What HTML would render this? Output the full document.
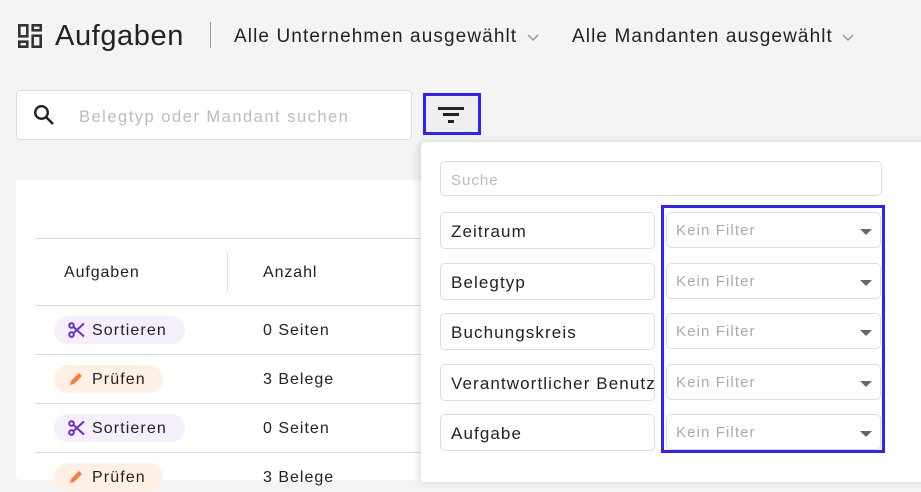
<!DOCTYPE html>
<html><head><meta charset="utf-8"><style>
*{box-sizing:border-box;margin:0;padding:0}
body{width:921px;height:475px;overflow:hidden;background:#f4f4f4;font-family:"Liberation Sans",sans-serif;color:#222;position:relative}
.a{position:absolute}
.t{white-space:nowrap}
.inp{position:absolute;background:#fff;border:1px solid #ddd;border-radius:4px}
.pill{position:absolute;left:54px;height:28px;border-radius:14px;font-size:16px;letter-spacing:1.1px;line-height:29px;padding-left:38px}
.pill svg{position:absolute;left:14px;top:6px}
.rowl{position:absolute;left:35px;width:386px;height:1px;background:#ddd}
.cell{position:absolute;left:263px;font-size:16px;letter-spacing:1px}
.fl{position:absolute;left:440px;width:215px;height:37px;border:1px solid #ddd;border-radius:5px;background:#fff;font-size:17px;letter-spacing:1.1px;line-height:37px;padding-left:10px;white-space:nowrap;overflow:hidden;color:#222}
.fr{position:absolute;left:666px;width:215px;height:36px;border:1px solid #ddd;border-radius:5px;background:#fff;font-size:15px;letter-spacing:1.1px;line-height:35px;padding-left:9px;color:#aaa}
.fr:after{content:"";position:absolute;right:8px;top:16px;border-left:6px solid transparent;border-right:6px solid transparent;border-top:6px solid #666}
</style></head><body>
<svg class="a" style="left:18px;top:24px" width="24" height="24" viewBox="0 0 24 24"><g fill="none" stroke="#333" stroke-width="2.6"><rect x="1.3" y="1.3" width="8" height="11"/><rect x="14.7" y="1.3" width="8" height="5"/><rect x="1.3" y="17.7" width="8" height="5"/><rect x="14.7" y="11.7" width="8" height="11"/></g></svg>
<div class="a t" style="left:55px;top:20px;font-size:29px;letter-spacing:.6px;color:#222">Aufgaben</div>
<div class="a" style="left:210px;top:22px;width:1px;height:26px;background:#999"></div>
<div class="a t" style="left:234px;top:26px;font-size:19px;letter-spacing:1.1px">Alle Unternehmen ausgewählt</div>
<svg class="a" style="left:527px;top:34px" width="12" height="8"><path d="M1 1l5 5 5-5" fill="none" stroke="#999" stroke-width="1.5"/></svg>
<div class="a t" style="left:572px;top:26px;font-size:19px;letter-spacing:1.1px">Alle Mandanten ausgewählt</div>
<svg class="a" style="left:842px;top:34px" width="12" height="8"><path d="M1 1l5 5 5-5" fill="none" stroke="#999" stroke-width="1.5"/></svg>
<div class="inp" style="left:16px;top:90px;width:396px;height:50px"></div>
<svg class="a" style="left:33px;top:104px" width="22" height="22" viewBox="0 0 22 22"><circle cx="8.5" cy="8.5" r="6.3" fill="none" stroke="#222" stroke-width="2.4"/><path d="M13 13l7 7" stroke="#222" stroke-width="2.6"/></svg>
<div class="a t" style="left:79px;top:108px;font-size:16.5px;letter-spacing:1.5px;color:#bbb">Belegtyp oder Mandant suchen</div>
<div class="a" style="left:423px;top:93px;width:58px;height:42px;border:3px solid #2f22ff;background:#efefef"></div>
<div class="a" style="left:438px;top:107px;width:26px;height:3px;background:#222"></div>
<div class="a" style="left:443px;top:113px;width:16px;height:3px;background:#222"></div>
<div class="a" style="left:448px;top:120px;width:6px;height:3px;background:#222"></div>
<div class="a" style="left:16px;top:180px;width:420px;height:300px;background:#fff;border-radius:4px"></div>
<div class="rowl" style="top:238px"></div>
<div class="a t" style="left:64px;top:264px;font-size:16px;letter-spacing:.9px;font-weight:500">Aufgaben</div>
<div class="a" style="left:227px;top:252px;width:1px;height:40px;background:#ddd"></div>
<div class="a t" style="left:263px;top:264px;font-size:16px;letter-spacing:.9px">Anzahl</div>
<div class="rowl" style="top:305px"></div>
<div class="rowl" style="top:354px"></div>
<div class="rowl" style="top:403px"></div>
<div class="rowl" style="top:452px"></div>
<div class="pill t" style="top:316px;width:131px;background:#f4eefd"><svg width="17" height="16" viewBox="0 0 17 16"><g fill="none" stroke="#6a2fd0" stroke-width="2"><circle cx="3.5" cy="3.5" r="2.3"/><circle cx="3.5" cy="12.5" r="2.3"/><path d="M5.5 5L16 14.5M5.5 11L16 1.5"/></g></svg>Sortieren</div>
<div class="cell t" style="top:322px">0 Seiten</div>
<div class="pill t" style="top:365px;width:109px;background:#fff0e6"><svg width="16" height="16" viewBox="0 0 16 16"><path d="M2 14l1-4 8-8 3 3-8 8z" fill="#ff7a3d"/></svg>Prüfen</div>
<div class="cell t" style="top:371px">3 Belege</div>
<div class="pill t" style="top:414px;width:131px;background:#f4eefd"><svg width="17" height="16" viewBox="0 0 17 16"><g fill="none" stroke="#6a2fd0" stroke-width="2"><circle cx="3.5" cy="3.5" r="2.3"/><circle cx="3.5" cy="12.5" r="2.3"/><path d="M5.5 5L16 14.5M5.5 11L16 1.5"/></g></svg>Sortieren</div>
<div class="cell t" style="top:420px">0 Seiten</div>
<div class="pill t" style="top:463px;width:109px;background:#fff0e6"><svg width="16" height="16" viewBox="0 0 16 16"><path d="M2 14l1-4 8-8 3 3-8 8z" fill="#ff7a3d"/></svg>Prüfen</div>
<div class="cell t" style="top:469px">3 Belege</div>
<div class="a" style="left:421px;top:142px;width:510px;height:340px;background:#fff;border-radius:5px 0 0 0;box-shadow:-3px 0 8px rgba(0,0,0,.12)"></div>
<div class="inp" style="left:440px;top:161px;width:442px;height:35px;border-radius:5px"></div>
<div class="a t" style="left:451px;top:172px;font-size:15px;letter-spacing:1px;color:#bbb">Suche</div>
<div class="fl" style="top:212px">Zeitraum</div>
<div class="fl" style="top:263px">Belegtyp</div>
<div class="fl" style="top:313px">Buchungskreis</div>
<div class="fl" style="top:364px">Verantwortlicher Benutzer</div>
<div class="fl" style="top:414px">Aufgabe</div>
<div class="fr" style="top:212px">Kein Filter</div>
<div class="fr" style="top:263px">Kein Filter</div>
<div class="fr" style="top:313px">Kein Filter</div>
<div class="fr" style="top:364px">Kein Filter</div>
<div class="fr" style="top:414px">Kein Filter</div>
<div class="a" style="left:661px;top:205px;width:224px;height:248px;border:3px solid #2f22ff"></div>
</body></html>
